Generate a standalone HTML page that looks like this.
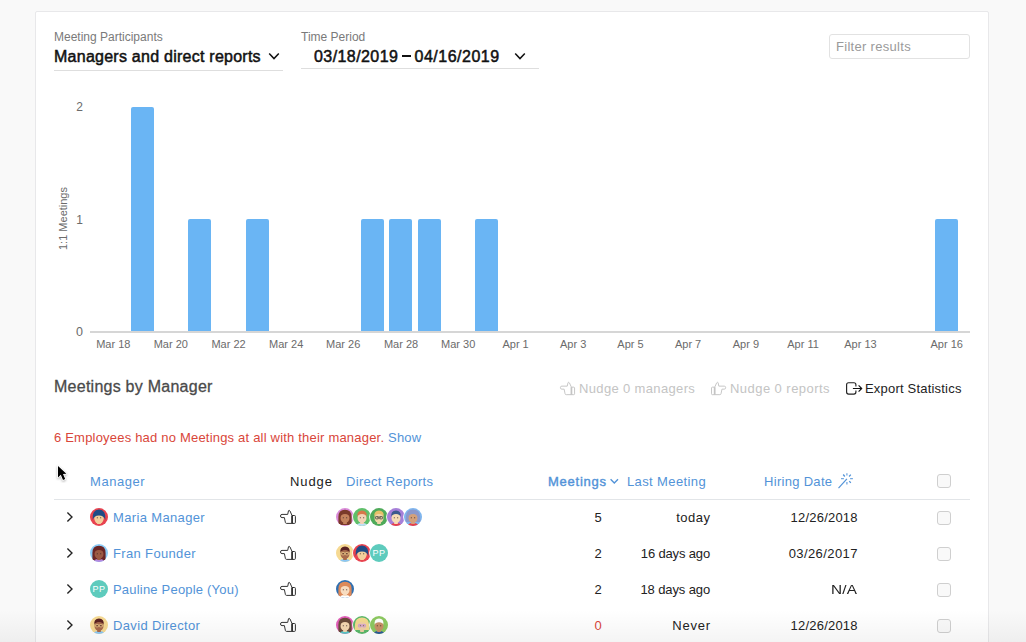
<!DOCTYPE html>
<html><head><meta charset="utf-8">
<style>
html,body{margin:0;padding:0;width:1026px;height:642px;overflow:hidden;background:#f9f9f9;font-family:"Liberation Sans",sans-serif;}
.a{position:absolute;white-space:nowrap;line-height:1;}
#card{position:absolute;left:35px;top:11px;width:952px;height:700px;background:#fff;border:1px solid #e8e8ea;border-radius:2px;}
.lbl{font-size:12px;color:#7a7a7a;}
.big{font-size:16px;color:#111;-webkit-text-stroke:0.5px #111;letter-spacing:0.25px;}
.uline{position:absolute;height:1px;background:#dedede;}
.ax{font-size:12px;color:#6b6b6b;}
.bar{position:absolute;background:#6ab5f4;border-radius:2px 2px 0 0;}
.xl{position:absolute;top:338.5px;font-size:11px;color:#6b6b6b;width:60px;text-align:center;line-height:1;}
.blue{color:#5293d8;}
.t13{font-size:13px;letter-spacing:0.3px;}
.cb{position:absolute;width:12px;height:12px;border:1px solid #cfcfcf;border-radius:3px;background:#f9f9f9;}
.av{position:absolute;width:18px;height:18px;border-radius:50%;overflow:hidden;}
.dk{color:#222;}
</style></head><body>
<div id="card"></div>

<!-- filters -->
<div class="a lbl" style="left:54px;top:31.3px;">Meeting Participants</div>
<div class="a big" style="left:54px;top:48.5px;">Managers and direct reports</div>
<svg class="a" style="left:268px;top:52px" width="12" height="9" viewBox="0 0 12 9"><path d="M1.2 1.4 L6 6.6 L10.8 1.4" fill="none" stroke="#111" stroke-width="1.5"/></svg>
<div class="uline" style="left:54px;top:70px;width:229px;"></div>

<div class="a lbl" style="left:301px;top:31.3px;letter-spacing:0;">Time Period</div>
<div class="a big" style="left:314px;top:48.5px;letter-spacing:0.42px;">03/18/2019</div><div class="a" style="left:401.5px;top:55px;width:9.6px;height:1.7px;background:#111;"></div><div class="a big" style="left:414.5px;top:48.5px;letter-spacing:0.5px;">04/16/2019</div>
<svg class="a" style="left:514px;top:52px" width="12" height="9" viewBox="0 0 12 9"><path d="M1.2 1.4 L6 6.6 L10.8 1.4" fill="none" stroke="#111" stroke-width="1.5"/></svg>
<div class="uline" style="left:301px;top:68px;width:238px;"></div>

<div class="a" style="left:829px;top:34px;width:139px;height:23px;border:1px solid #e2e2e2;border-radius:3px;"></div>
<div class="a t13" style="left:836px;top:40px;color:#9a9a9a;">Filter results</div>

<!-- chart -->
<div class="a ax" style="left:60px;top:101.3px;width:23px;text-align:right;">2</div>
<div class="a ax" style="left:60px;top:213.6px;width:23px;text-align:right;">1</div>
<div class="a ax" style="left:60px;top:326px;width:23px;text-align:right;font-size:12.5px;">0</div>
<div class="a ax" style="left:26px;top:213px;width:74px;font-size:11px;text-align:center;transform:rotate(-90deg);">1:1 Meetings</div>
<div class="a" style="left:90px;top:331px;width:880px;height:2px;background:#d6d6d6;"></div>

<div class="bar" style="left:131px;top:107px;width:22.5px;height:224px;"></div>
<div class="bar" style="left:188px;top:219px;width:22.5px;height:112px;"></div>
<div class="bar" style="left:246px;top:219px;width:22.5px;height:112px;"></div>
<div class="bar" style="left:361px;top:219px;width:22.5px;height:112px;"></div>
<div class="bar" style="left:389px;top:219px;width:22.5px;height:112px;"></div>
<div class="bar" style="left:418px;top:219px;width:22.5px;height:112px;"></div>
<div class="bar" style="left:475px;top:219px;width:22.5px;height:112px;"></div>
<div class="bar" style="left:935px;top:219px;width:22.5px;height:112px;"></div>

<div class="xl" style="left:83.3px;">Mar 18</div>
<div class="xl" style="left:140.8px;">Mar 20</div>
<div class="xl" style="left:198.5px;">Mar 22</div>
<div class="xl" style="left:256.2px;">Mar 24</div>
<div class="xl" style="left:313.2px;">Mar 26</div>
<div class="xl" style="left:371px;">Mar 28</div>
<div class="xl" style="left:428.2px;">Mar 30</div>
<div class="xl" style="left:485.6px;">Apr 1</div>
<div class="xl" style="left:543.2px;">Apr 3</div>
<div class="xl" style="left:600.5px;">Apr 5</div>
<div class="xl" style="left:658.1px;">Apr 7</div>
<div class="xl" style="left:715.9px;">Apr 9</div>
<div class="xl" style="left:773px;">Apr 11</div>
<div class="xl" style="left:830.5px;">Apr 13</div>
<div class="xl" style="left:916.7px;">Apr 16</div>

<!-- section header -->
<div class="a" style="left:54px;top:378.6px;font-size:16px;color:#4a4a4a;-webkit-text-stroke:0.3px #4a4a4a;letter-spacing:0.25px;">Meetings by Manager</div>

<div class="a t13" style="left:579px;top:381.5px;color:#c4c4c4;letter-spacing:0.35px;">Nudge 0 managers</div>
<div class="a t13" style="left:730px;top:381.5px;color:#c4c4c4;letter-spacing:0.45px;">Nudge 0 reports</div>
<div class="a t13 dk" style="left:865px;top:381.5px;letter-spacing:0.2px;">Export Statistics</div>

<div class="a t13" style="left:54px;top:430.6px;color:#d9463a;letter-spacing:0.2px;">6 Employees had no Meetings at all with their manager. <span class="blue">Show</span></div>

<!-- table header -->
<div class="a t13 blue" style="left:90px;top:474.8px;letter-spacing:0.55px;">Manager</div>
<div class="a t13 dk" style="left:290px;top:474.8px;letter-spacing:0.9px;">Nudge</div>
<div class="a t13 blue" style="left:346px;top:474.8px;">Direct Reports</div>
<div class="a t13 blue" style="left:548px;top:474.8px;-webkit-text-stroke:0.4px #5293d8;letter-spacing:0.75px;">Meetings</div>
<div class="a t13 blue" style="left:627px;top:474.8px;letter-spacing:0.38px;">Last Meeting</div>
<div class="a t13 blue" style="left:764px;top:474.8px;">Hiring Date</div>
<div class="cb" style="left:937px;top:474px;"></div>
<div class="a" style="left:54px;top:499px;width:916px;height:1px;background:#e2e5e8;"></div>

<!--ROWS-->
<svg class="a" style="left:559px;top:381px" width="17.099999999999998" height="15.2" viewBox="0 0 18 16"><g><path d="M12.9 6.2 L11 2 Q10.3 0.9 9.5 1.7 L8.7 5.4 L3 5.4 Q1.5 5.4 1.5 7 Q1.5 8.6 3 8.6 L5.4 8.6 L6.4 13.5 Q6.6 14.4 7.6 14.4 L12.9 14.4" fill="none" stroke="#c4c4c4" stroke-width="1.0" stroke-linejoin="round"/><path d="M12.9 6.5 L15.5 6.5 Q16.4 6.5 16.4 7.4 L16.4 13.5 Q16.4 14.4 15.5 14.4 L12.9 14.4 Z" fill="none" stroke="#c4c4c4" stroke-width="1.0"/><line x1="13.2" y1="6.5" x2="13.2" y2="14.4" stroke="#c4c4c4" stroke-width="1.6"/></g></svg>
<svg class="a" style="left:710px;top:381px" width="17.099999999999998" height="15.2" viewBox="0 0 18 16"><g transform="translate(18,0) scale(-1,1)"><path d="M12.9 6.2 L11 2 Q10.3 0.9 9.5 1.7 L8.7 5.4 L3 5.4 Q1.5 5.4 1.5 7 Q1.5 8.6 3 8.6 L5.4 8.6 L6.4 13.5 Q6.6 14.4 7.6 14.4 L12.9 14.4" fill="none" stroke="#c4c4c4" stroke-width="1.0" stroke-linejoin="round"/><path d="M12.9 6.5 L15.5 6.5 Q16.4 6.5 16.4 7.4 L16.4 13.5 Q16.4 14.4 15.5 14.4 L12.9 14.4 Z" fill="none" stroke="#c4c4c4" stroke-width="1.0"/><line x1="13.2" y1="6.5" x2="13.2" y2="14.4" stroke="#c4c4c4" stroke-width="1.6"/></g></svg>
<svg class="a" style="left:844px;top:380px" width="20" height="17" viewBox="844 380 20 17"><path d="M855.9 386.4 L855.9 384.7 Q855.9 382.7 853.9 382.7 L848.6 382.7 Q846.6 382.7 846.6 384.7 L846.6 392.05 Q846.6 394.05 848.6 394.05 L853.9 394.05 Q855.9 394.05 855.9 392.05 L855.9 390.5" fill="none" stroke="#222" stroke-width="1.15"/><path d="M852.9 388.5 L861.6 388.5 M858.6 385.4 L861.7 388.5 L858.6 391.6" fill="none" stroke="#111" stroke-width="1.15"/></svg>
<svg class="a" style="left:54px;top:463px" width="16" height="20" viewBox="54 463 16 20"><path d="M58 466 L58 477.4 L60.8 474.8 L63 480 L65.2 479 L63 474 L66.4 473.8 Z" fill="#000" stroke="#fff" stroke-width="1.6" paint-order="stroke" stroke-linejoin="round" style="filter:drop-shadow(0 1px 1px rgba(0,0,0,.3))"/></svg>
<svg class="a" style="left:608px;top:476px" width="12" height="10" viewBox="608 476 12 10"><path d="M610.6 479.2 L614.3 482.9 L618 479.2" fill="none" stroke="#5293d8" stroke-width="1.4"/></svg>
<svg class="a" style="left:836px;top:471px" width="19" height="19" viewBox="836 471 19 19" stroke="#5293d8" fill="none"><path d="M838.5 488.2 L846.9 478.9" stroke-width="1.2"/><path d="M846.9 473.2 L846.9 475.6 M846.9 482 L846.9 484.6 M841 478.7 L843.9 478.7 M850.1 478.7 L852.9 478.7" stroke-width="1.3" opacity="0.8"/><path d="M843.2 474.5 L844.8 476.5 M850.8 474.6 L849.1 476.5 M849.3 481.1 L850.8 482.9" stroke-width="1.3"/></svg>
<svg class="a" style="left:65px;top:510px" width="10" height="14" viewBox="0 0 10 14"><path d="M2.4 2.4 L7 7 L2.4 11.6" fill="none" stroke="#222" stroke-width="1.35"/></svg>
<svg class="a" style="left:90px;top:508px" width="18" height="18" viewBox="0 0 18 18"><defs><clipPath id="c90_508"><circle cx="9" cy="9" r="9"/></clipPath></defs><circle cx="9" cy="9" r="9" fill="#e8434f"/><g clip-path="url(#c90_508)"><rect x="7.2" y="12" width="3.6" height="4" fill="#f3cf9c"/><ellipse cx="9" cy="9.9" rx="4.5" ry="5.1" fill="#f3cf9c"/><ellipse cx="9" cy="10.6" rx="4.6" ry="5.2" fill="#f3cf9c"/><path d="M2.6 12 Q1.8 1.4 9 1.4 Q16.2 1.4 15.4 12 Q14.2 7.6 9 7.4 Q3.8 7.6 2.6 12 Z" fill="#1f4c86"/><circle cx="7.3" cy="9.7" r="0.55" fill="#3a2a2a"/><circle cx="10.7" cy="9.7" r="0.55" fill="#3a2a2a"/></g></svg>
<div class="a t13 blue" style="left:113px;top:510.7px;letter-spacing:0.35px;">Maria Manager</div>
<svg class="a" style="left:279px;top:509px" width="18.0" height="16.0" viewBox="0 0 18 16"><g><path d="M12.9 6.2 L11 2 Q10.3 0.9 9.5 1.7 L8.7 5.4 L3 5.4 Q1.5 5.4 1.5 7 Q1.5 8.6 3 8.6 L5.4 8.6 L6.4 13.5 Q6.6 14.4 7.6 14.4 L12.9 14.4" fill="none" stroke="#333" stroke-width="1.0" stroke-linejoin="round"/><path d="M12.9 6.5 L15.5 6.5 Q16.4 6.5 16.4 7.4 L16.4 13.5 Q16.4 14.4 15.5 14.4 L12.9 14.4 Z" fill="none" stroke="#333" stroke-width="1.0"/><line x1="13.2" y1="6.5" x2="13.2" y2="14.4" stroke="#333" stroke-width="1.6"/></g></svg>
<svg class="a" style="left:336px;top:508px" width="18" height="18" viewBox="0 0 18 18"><defs><clipPath id="c336_508"><circle cx="9" cy="9" r="9"/></clipPath></defs><circle cx="9" cy="9" r="9" fill="#d98ad8"/><g clip-path="url(#c336_508)"><path d="M2.4 17 L2.4 9 Q2.4 1.8 9 1.8 Q15.6 1.8 15.6 9 L15.6 17 Z" fill="#7a3a2a"/><rect x="7.2" y="12" width="3.6" height="4" fill="#c4835e"/><ellipse cx="9" cy="9.9" rx="4.5" ry="5.1" fill="#c4835e"/><path d="M4.2 9.2 Q3.6 2.6 9 2.6 Q14.4 2.6 13.8 9.2 Q13.2 6.4 9 6.1 Q4.8 6.4 4.2 9.2 Z" fill="#7a3a2a"/><circle cx="7.3" cy="9.7" r="0.55" fill="#3a2a2a"/><circle cx="10.7" cy="9.7" r="0.55" fill="#3a2a2a"/></g></svg>
<svg class="a" style="left:352px;top:507px" width="20" height="20" viewBox="-1 -1 20 20"><defs><clipPath id="c353_508"><circle cx="9" cy="9" r="9"/></clipPath></defs><circle cx="9" cy="9" r="9.9" fill="#fff"/><circle cx="9" cy="9" r="9" fill="#5fbf6a"/><g clip-path="url(#c353_508)"><ellipse cx="9" cy="19.6" rx="7" ry="4.6" fill="#bfe0f8"/><rect x="7.2" y="12" width="3.6" height="4" fill="#f4d2b6"/><ellipse cx="9" cy="9.9" rx="4.5" ry="5.1" fill="#f4d2b6"/><path d="M4.2 9.2 Q3.6 2.6 9 2.6 Q14.4 2.6 13.8 9.2 Q13.2 6.4 9 6.1 Q4.8 6.4 4.2 9.2 Z" fill="#d6774a"/><circle cx="7.3" cy="9.7" r="0.55" fill="#3a2a2a"/><circle cx="10.7" cy="9.7" r="0.55" fill="#3a2a2a"/></g></svg>
<svg class="a" style="left:369px;top:507px" width="20" height="20" viewBox="-1 -1 20 20"><defs><clipPath id="c370_508"><circle cx="9" cy="9" r="9"/></clipPath></defs><circle cx="9" cy="9" r="9.9" fill="#fff"/><circle cx="9" cy="9" r="9" fill="#4faa5a"/><g clip-path="url(#c370_508)"><rect x="7.2" y="12" width="3.6" height="4" fill="#f1d6a8"/><ellipse cx="9" cy="9.9" rx="4.5" ry="5.1" fill="#f1d6a8"/><path d="M4.2 9.2 Q3.6 2.6 9 2.6 Q14.4 2.6 13.8 9.2 Q13.2 6.4 9 6.1 Q4.8 6.4 4.2 9.2 Z" fill="#e6c06a"/><circle cx="7.3" cy="9.7" r="0.55" fill="#3a2a2a"/><circle cx="10.7" cy="9.7" r="0.55" fill="#3a2a2a"/><rect x="5.5" y="8.5" width="3.1" height="2.4" rx="0.6" fill="none" stroke="#444" stroke-width="0.75"/><rect x="9.4" y="8.5" width="3.1" height="2.4" rx="0.6" fill="none" stroke="#444" stroke-width="0.75"/></g></svg>
<svg class="a" style="left:386px;top:507px" width="20" height="20" viewBox="-1 -1 20 20"><defs><clipPath id="c387_508"><circle cx="9" cy="9" r="9"/></clipPath></defs><circle cx="9" cy="9" r="9.9" fill="#fff"/><circle cx="9" cy="9" r="9" fill="#a67fd8"/><g clip-path="url(#c387_508)"><ellipse cx="9" cy="19.6" rx="7" ry="4.6" fill="#e8404a"/><rect x="7.2" y="12" width="3.6" height="4" fill="#f6dcb4"/><ellipse cx="9" cy="9.9" rx="4.5" ry="5.1" fill="#f6dcb4"/><path d="M4.2 9.2 Q3.6 2.6 9 2.6 Q14.4 2.6 13.8 9.2 Q13.2 6.4 9 6.1 Q4.8 6.4 4.2 9.2 Z" fill="#3c5a8c"/><circle cx="7.3" cy="9.7" r="0.55" fill="#3a2a2a"/><circle cx="10.7" cy="9.7" r="0.55" fill="#3a2a2a"/></g></svg>
<svg class="a" style="left:403px;top:507px" width="20" height="20" viewBox="-1 -1 20 20"><defs><clipPath id="c404_508"><circle cx="9" cy="9" r="9"/></clipPath></defs><circle cx="9" cy="9" r="9.9" fill="#fff"/><circle cx="9" cy="9" r="9" fill="#7fb6ee"/><g clip-path="url(#c404_508)"><path d="M1.5 14 L2 8 Q2.5 1.5 9 1.5 Q15.5 1.5 16 8 L16.5 14 Z" fill="#8b98cc"/><ellipse cx="9" cy="19.6" rx="7" ry="4.6" fill="#e8404a"/><rect x="7.2" y="12" width="3.6" height="4" fill="#d4a07a"/><ellipse cx="9" cy="9.9" rx="4.5" ry="5.1" fill="#d4a07a"/><path d="M4.2 9.2 Q3.6 2.6 9 2.6 Q14.4 2.6 13.8 9.2 Q13.2 6.4 9 6.1 Q4.8 6.4 4.2 9.2 Z" fill="#8b98cc"/><circle cx="7.3" cy="9.7" r="0.55" fill="#3a2a2a"/><circle cx="10.7" cy="9.7" r="0.55" fill="#3a2a2a"/></g></svg>
<div class="a t13" style="left:541px;top:510.7px;width:61px;text-align:right;color:#222;">5</div>
<div class="a t13 dk" style="left:610px;top:510.7px;width:100.5px;text-align:right;letter-spacing:0.5px;">today</div>
<div class="a t13 dk" style="left:757px;top:510.7px;width:100.7px;text-align:right;letter-spacing:0.2px;">12/26/2018</div>
<div class="cb" style="left:937px;top:510.5px;"></div>
<svg class="a" style="left:65px;top:546px" width="10" height="14" viewBox="0 0 10 14"><path d="M2.4 2.4 L7 7 L2.4 11.6" fill="none" stroke="#222" stroke-width="1.35"/></svg>
<svg class="a" style="left:90px;top:544px" width="18" height="18" viewBox="0 0 18 18"><defs><clipPath id="c90_544"><circle cx="9" cy="9" r="9"/></clipPath></defs><circle cx="9" cy="9" r="9" fill="#8ccbf6"/><g clip-path="url(#c90_544)"><path d="M2.4 17 L2.4 9 Q2.4 1.8 9 1.8 Q15.6 1.8 15.6 9 L15.6 17 Z" fill="#6b2626"/><ellipse cx="9" cy="19.6" rx="7" ry="4.6" fill="#b38ae0"/><rect x="7.2" y="12" width="3.6" height="4" fill="#9c5a44"/><ellipse cx="9" cy="9.9" rx="4.5" ry="5.1" fill="#9c5a44"/><path d="M4.2 9.2 Q3.6 2.6 9 2.6 Q14.4 2.6 13.8 9.2 Q13.2 6.4 9 6.1 Q4.8 6.4 4.2 9.2 Z" fill="#6b2626"/><circle cx="7.3" cy="9.7" r="0.55" fill="#3a2a2a"/><circle cx="10.7" cy="9.7" r="0.55" fill="#3a2a2a"/></g></svg>
<div class="a t13 blue" style="left:113px;top:546.7px;letter-spacing:0.35px;">Fran Founder</div>
<svg class="a" style="left:279px;top:545px" width="18.0" height="16.0" viewBox="0 0 18 16"><g><path d="M12.9 6.2 L11 2 Q10.3 0.9 9.5 1.7 L8.7 5.4 L3 5.4 Q1.5 5.4 1.5 7 Q1.5 8.6 3 8.6 L5.4 8.6 L6.4 13.5 Q6.6 14.4 7.6 14.4 L12.9 14.4" fill="none" stroke="#333" stroke-width="1.0" stroke-linejoin="round"/><path d="M12.9 6.5 L15.5 6.5 Q16.4 6.5 16.4 7.4 L16.4 13.5 Q16.4 14.4 15.5 14.4 L12.9 14.4 Z" fill="none" stroke="#333" stroke-width="1.0"/><line x1="13.2" y1="6.5" x2="13.2" y2="14.4" stroke="#333" stroke-width="1.6"/></g></svg>
<svg class="a" style="left:336px;top:544px" width="18" height="18" viewBox="0 0 18 18"><defs><clipPath id="c336_544"><circle cx="9" cy="9" r="9"/></clipPath></defs><circle cx="9" cy="9" r="9" fill="#f6d992"/><g clip-path="url(#c336_544)"><ellipse cx="9" cy="19.6" rx="7" ry="4.6" fill="#8cc8f5"/><rect x="7.2" y="12" width="3.6" height="4" fill="#a86a4c"/><ellipse cx="9" cy="9.9" rx="4.5" ry="5.1" fill="#a86a4c"/><path d="M4.2 9.2 Q3.6 2.6 9 2.6 Q14.4 2.6 13.8 9.2 Q13.2 6.4 9 6.1 Q4.8 6.4 4.2 9.2 Z" fill="#5a2222"/><circle cx="7.3" cy="9.7" r="0.55" fill="#3a2a2a"/><circle cx="10.7" cy="9.7" r="0.55" fill="#3a2a2a"/><rect x="5.5" y="8.5" width="3.1" height="2.4" rx="0.6" fill="none" stroke="#e8c98a" stroke-width="0.75"/><rect x="9.4" y="8.5" width="3.1" height="2.4" rx="0.6" fill="none" stroke="#e8c98a" stroke-width="0.75"/></g></svg>
<svg class="a" style="left:352px;top:543px" width="20" height="20" viewBox="-1 -1 20 20"><defs><clipPath id="c353_544"><circle cx="9" cy="9" r="9"/></clipPath></defs><circle cx="9" cy="9" r="9.9" fill="#fff"/><circle cx="9" cy="9" r="9" fill="#e8434f"/><g clip-path="url(#c353_544)"><rect x="7.2" y="12" width="3.6" height="4" fill="#f3cf9c"/><ellipse cx="9" cy="9.9" rx="4.5" ry="5.1" fill="#f3cf9c"/><ellipse cx="9" cy="10.6" rx="4.6" ry="5.2" fill="#f3cf9c"/><path d="M2.6 12 Q1.8 1.4 9 1.4 Q16.2 1.4 15.4 12 Q14.2 7.6 9 7.4 Q3.8 7.6 2.6 12 Z" fill="#1f4c86"/><circle cx="7.3" cy="9.7" r="0.55" fill="#3a2a2a"/><circle cx="10.7" cy="9.7" r="0.55" fill="#3a2a2a"/></g></svg>
<svg class="a" style="left:369px;top:543px" width="20" height="20" viewBox="-1 -1 20 20"><defs><clipPath id="c370_544"><circle cx="9" cy="9" r="9"/></clipPath></defs><circle cx="9" cy="9" r="9.9" fill="#fff"/><circle cx="9" cy="9" r="9" fill="#5ecbbd"/><text x="9" y="12.3" text-anchor="middle" font-family="Liberation Sans" font-size="9" fill="#fff" letter-spacing="0.4">PP</text></svg>
<div class="a t13" style="left:541px;top:546.7px;width:61px;text-align:right;color:#222;">2</div>
<div class="a t13 dk" style="left:610px;top:546.7px;width:100px;text-align:right;letter-spacing:-0.15px;">16 days ago</div>
<div class="a t13 dk" style="left:757px;top:546.7px;width:100.92px;text-align:right;letter-spacing:0.42px;">03/26/2017</div>
<div class="cb" style="left:937px;top:546.5px;"></div>
<svg class="a" style="left:65px;top:582px" width="10" height="14" viewBox="0 0 10 14"><path d="M2.4 2.4 L7 7 L2.4 11.6" fill="none" stroke="#222" stroke-width="1.35"/></svg>
<svg class="a" style="left:90px;top:580px" width="18" height="18" viewBox="0 0 18 18"><defs><clipPath id="c90_580"><circle cx="9" cy="9" r="9"/></clipPath></defs><circle cx="9" cy="9" r="9" fill="#5ecbbd"/><text x="9" y="12.3" text-anchor="middle" font-family="Liberation Sans" font-size="9" fill="#fff" letter-spacing="0.4">PP</text></svg>
<div class="a t13 blue" style="left:113px;top:582.7px;letter-spacing:0.2px;">Pauline People (You)</div>
<svg class="a" style="left:279px;top:581px" width="18.0" height="16.0" viewBox="0 0 18 16"><g><path d="M12.9 6.2 L11 2 Q10.3 0.9 9.5 1.7 L8.7 5.4 L3 5.4 Q1.5 5.4 1.5 7 Q1.5 8.6 3 8.6 L5.4 8.6 L6.4 13.5 Q6.6 14.4 7.6 14.4 L12.9 14.4" fill="none" stroke="#333" stroke-width="1.0" stroke-linejoin="round"/><path d="M12.9 6.5 L15.5 6.5 Q16.4 6.5 16.4 7.4 L16.4 13.5 Q16.4 14.4 15.5 14.4 L12.9 14.4 Z" fill="none" stroke="#333" stroke-width="1.0"/><line x1="13.2" y1="6.5" x2="13.2" y2="14.4" stroke="#333" stroke-width="1.6"/></g></svg>
<svg class="a" style="left:336px;top:580px" width="18" height="18" viewBox="0 0 18 18"><defs><clipPath id="c336_580"><circle cx="9" cy="9" r="9"/></clipPath></defs><circle cx="9" cy="9" r="9" fill="#2f6fb0"/><g clip-path="url(#c336_580)"><path d="M2.4 17 L2.4 9 Q2.4 1.8 9 1.8 Q15.6 1.8 15.6 9 L15.6 17 Z" fill="#dd8a5a"/><ellipse cx="9" cy="19.6" rx="7" ry="4.6" fill="#ffffff"/><rect x="7.2" y="12" width="3.6" height="4" fill="#f7dcc0"/><ellipse cx="9" cy="9.9" rx="4.5" ry="5.1" fill="#f7dcc0"/><path d="M4.2 9.2 Q3.6 2.6 9 2.6 Q14.4 2.6 13.8 9.2 Q13.2 6.4 9 6.1 Q4.8 6.4 4.2 9.2 Z" fill="#dd8a5a"/><circle cx="7.3" cy="9.7" r="0.55" fill="#3a2a2a"/><circle cx="10.7" cy="9.7" r="0.55" fill="#3a2a2a"/></g></svg>
<div class="a t13" style="left:541px;top:582.7px;width:61px;text-align:right;color:#222;">2</div>
<div class="a t13 dk" style="left:610px;top:582.7px;width:100px;text-align:right;letter-spacing:-0.12px;">18 days ago</div>
<div class="a t13 dk" style="left:757px;top:582.7px;width:100.7px;text-align:right;letter-spacing:0.2px;"><span style="display:inline-block;transform:scaleX(1.18);transform-origin:100% 50%">N/A</span></div>
<div class="cb" style="left:937px;top:582.5px;"></div>
<svg class="a" style="left:65px;top:618px" width="10" height="14" viewBox="0 0 10 14"><path d="M2.4 2.4 L7 7 L2.4 11.6" fill="none" stroke="#222" stroke-width="1.35"/></svg>
<svg class="a" style="left:90px;top:616px" width="18" height="18" viewBox="0 0 18 18"><defs><clipPath id="c90_616"><circle cx="9" cy="9" r="9"/></clipPath></defs><circle cx="9" cy="9" r="9" fill="#f6d992"/><g clip-path="url(#c90_616)"><ellipse cx="9" cy="19.6" rx="7" ry="4.6" fill="#8cc8f5"/><rect x="7.2" y="12" width="3.6" height="4" fill="#a86a4c"/><ellipse cx="9" cy="9.9" rx="4.5" ry="5.1" fill="#a86a4c"/><path d="M4.2 9.2 Q3.6 2.6 9 2.6 Q14.4 2.6 13.8 9.2 Q13.2 6.4 9 6.1 Q4.8 6.4 4.2 9.2 Z" fill="#5a2222"/><circle cx="7.3" cy="9.7" r="0.55" fill="#3a2a2a"/><circle cx="10.7" cy="9.7" r="0.55" fill="#3a2a2a"/><rect x="5.5" y="8.5" width="3.1" height="2.4" rx="0.6" fill="none" stroke="#e8c98a" stroke-width="0.75"/><rect x="9.4" y="8.5" width="3.1" height="2.4" rx="0.6" fill="none" stroke="#e8c98a" stroke-width="0.75"/></g></svg>
<div class="a t13 blue" style="left:113px;top:618.7px;letter-spacing:0.35px;">David Director</div>
<svg class="a" style="left:279px;top:617px" width="18.0" height="16.0" viewBox="0 0 18 16"><g><path d="M12.9 6.2 L11 2 Q10.3 0.9 9.5 1.7 L8.7 5.4 L3 5.4 Q1.5 5.4 1.5 7 Q1.5 8.6 3 8.6 L5.4 8.6 L6.4 13.5 Q6.6 14.4 7.6 14.4 L12.9 14.4" fill="none" stroke="#333" stroke-width="1.0" stroke-linejoin="round"/><path d="M12.9 6.5 L15.5 6.5 Q16.4 6.5 16.4 7.4 L16.4 13.5 Q16.4 14.4 15.5 14.4 L12.9 14.4 Z" fill="none" stroke="#333" stroke-width="1.0"/><line x1="13.2" y1="6.5" x2="13.2" y2="14.4" stroke="#333" stroke-width="1.6"/></g></svg>
<svg class="a" style="left:336px;top:616px" width="18" height="18" viewBox="0 0 18 18"><defs><clipPath id="c336_616"><circle cx="9" cy="9" r="9"/></clipPath></defs><circle cx="9" cy="9" r="9" fill="#e25db8"/><g clip-path="url(#c336_616)"><path d="M2.4 17 L2.4 9 Q2.4 1.8 9 1.8 Q15.6 1.8 15.6 9 L15.6 17 Z" fill="#6a4a3a"/><ellipse cx="9" cy="19.6" rx="7" ry="4.6" fill="#5ac8c8"/><rect x="7.2" y="12" width="3.6" height="4" fill="#f4d6b0"/><ellipse cx="9" cy="9.9" rx="4.5" ry="5.1" fill="#f4d6b0"/><path d="M4.2 9.2 Q3.6 2.6 9 2.6 Q14.4 2.6 13.8 9.2 Q13.2 6.4 9 6.1 Q4.8 6.4 4.2 9.2 Z" fill="#6a4a3a"/><circle cx="7.3" cy="9.7" r="0.55" fill="#3a2a2a"/><circle cx="10.7" cy="9.7" r="0.55" fill="#3a2a2a"/></g></svg>
<svg class="a" style="left:352px;top:615px" width="20" height="20" viewBox="-1 -1 20 20"><defs><clipPath id="c353_616"><circle cx="9" cy="9" r="9"/></clipPath></defs><circle cx="9" cy="9" r="9.9" fill="#fff"/><circle cx="9" cy="9" r="9" fill="#5bb86a"/><g clip-path="url(#c353_616)"><path d="M1.5 14 L2 8 Q2.5 1.5 9 1.5 Q15.5 1.5 16 8 L16.5 14 Z" fill="#f3d88e"/><rect x="7.2" y="12" width="3.6" height="4" fill="#efcfa6"/><ellipse cx="9" cy="9.9" rx="4.5" ry="5.1" fill="#efcfa6"/><path d="M4.2 9.2 Q3.6 2.6 9 2.6 Q14.4 2.6 13.8 9.2 Q13.2 6.4 9 6.1 Q4.8 6.4 4.2 9.2 Z" fill="#f3d88e"/><circle cx="7.3" cy="9.7" r="0.55" fill="#3a2a2a"/><circle cx="10.7" cy="9.7" r="0.55" fill="#3a2a2a"/><rect x="5.5" y="8.5" width="3.1" height="2.4" rx="0.6" fill="none" stroke="#c890e0" stroke-width="0.75"/><rect x="9.4" y="8.5" width="3.1" height="2.4" rx="0.6" fill="none" stroke="#c890e0" stroke-width="0.75"/></g></svg>
<svg class="a" style="left:369px;top:615px" width="20" height="20" viewBox="-1 -1 20 20"><defs><clipPath id="c370_616"><circle cx="9" cy="9" r="9"/></clipPath></defs><circle cx="9" cy="9" r="9.9" fill="#fff"/><circle cx="9" cy="9" r="9" fill="#8cc860"/><g clip-path="url(#c370_616)"><ellipse cx="9" cy="19.6" rx="7" ry="4.6" fill="#2a5a9a"/><rect x="7.2" y="12" width="3.6" height="4" fill="#c89068"/><ellipse cx="9" cy="9.9" rx="4.5" ry="5.1" fill="#c89068"/><path d="M4.6 8.8 Q4 2.5 9 2.5 Q14 2.5 13.4 8.8 Q12.8 6.4 9 6.3 Q5.2 6.4 4.6 8.8 Z" fill="#ffffff"/><circle cx="7.3" cy="9.7" r="0.55" fill="#3a2a2a"/><circle cx="10.7" cy="9.7" r="0.55" fill="#3a2a2a"/></g></svg>
<div class="a t13" style="left:541px;top:618.7px;width:61px;text-align:right;color:#d9463a;">0</div>
<div class="a t13 dk" style="left:610px;top:618.7px;width:100.75px;text-align:right;letter-spacing:0.75px;">Never</div>
<div class="a t13 dk" style="left:757px;top:618.7px;width:100.7px;text-align:right;letter-spacing:0.2px;">12/26/2018</div>
<div class="cb" style="left:937px;top:618.5px;"></div>
<!--/ROWS-->
<div id="fade" style="position:absolute;left:0;top:610px;width:1026px;height:32px;background:linear-gradient(rgba(0,0,0,0),rgba(0,0,0,0.045));pointer-events:none;"></div>
</body></html>
